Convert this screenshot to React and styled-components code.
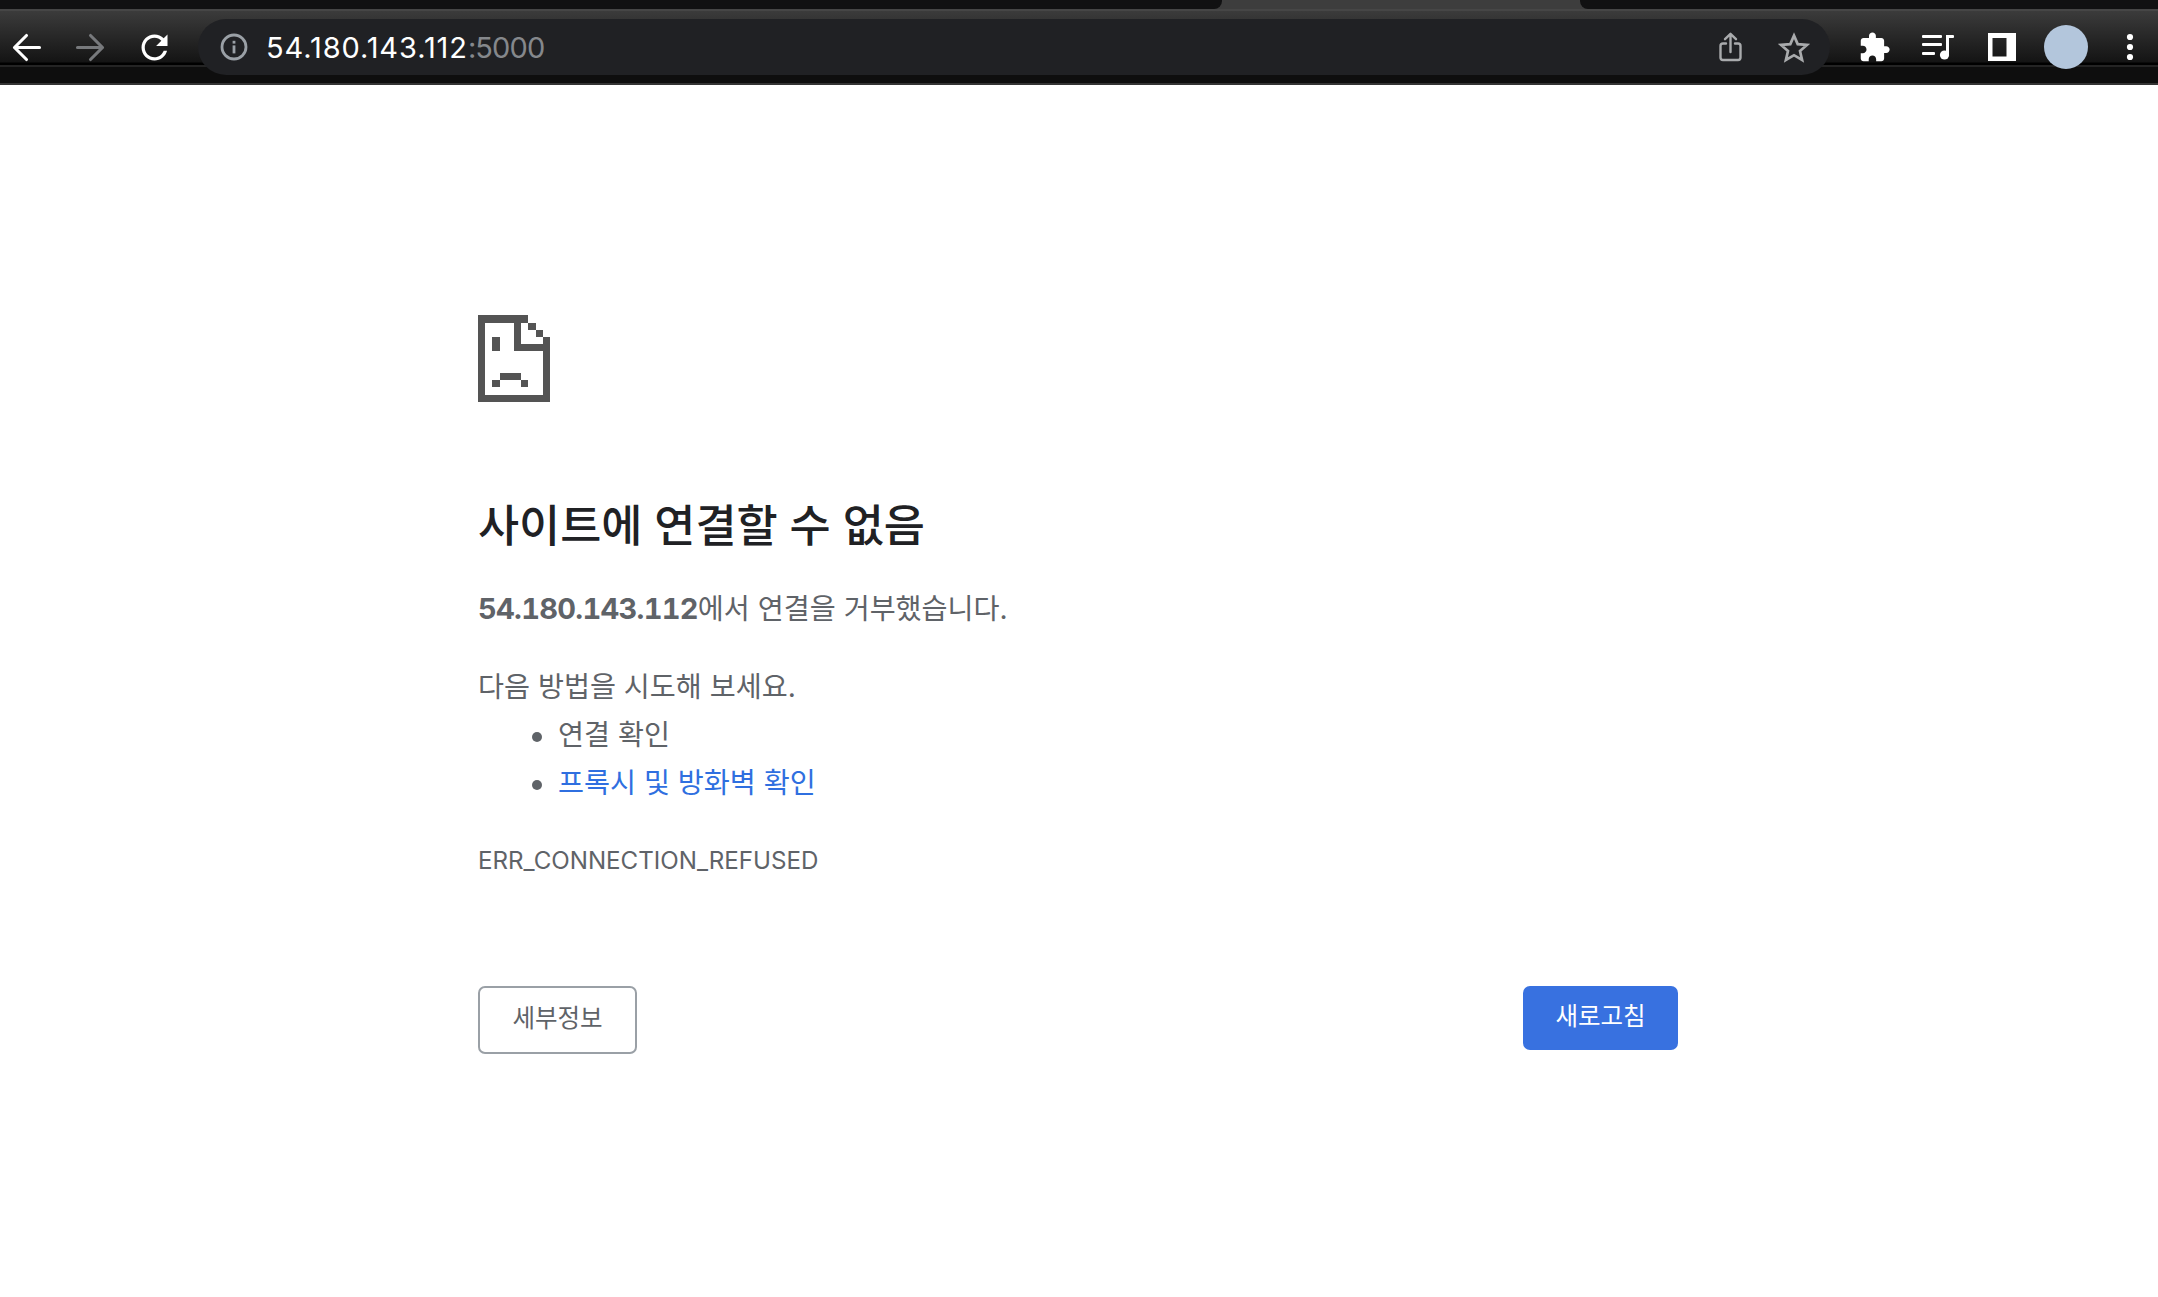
import React from "react";
import styled, { createGlobalStyle } from "styled-components";

const GlobalStyle = createGlobalStyle`
  html, body {
    margin: 0;
    padding: 0;
    background: #fff;
  }
  body {
    font-family: Inter, "Noto Sans CJK KR", sans-serif;
    color: #5f6368;
  }
`;

const BrowserChrome = styled.header`
  height: 85px;
  display: flex;
  flex-direction: column;
`;

const TabStrip = styled.div`
  height: 9px;
  display: flex;
  justify-content: space-between;
  background: #3d3d3d;
`;

const InactiveTabs = styled.div`
  width: ${p => p.$width}px;
  background: #111112;
  border-bottom-left-radius: ${p => (p.$side === "right" ? 8 : 0)}px;
  border-bottom-right-radius: ${p => (p.$side === "left" ? 8 : 0)}px;
`;

const Toolbar = styled.div`
  flex: 1;
  box-sizing: border-box;
  display: flex;
  align-items: flex-start;
  gap: 20px;
  padding: 10px 6px 0 4px;
  border-bottom: 2px solid #343434;
  background: linear-gradient(
    to bottom,
    #464646 0,
    #464646 2px,
    #3b3b3b 2px,
    #141414 53px,
    #000 54px,
    #000 56px,
    #242424 56px,
    #242424 58px,
    #0e0e0e 58px
  );
`;

const IconSlot = styled.button`
  flex: none;
  width: 44px;
  height: 56px;
  padding: 0;
  border: 0;
  background: none;
  display: flex;
  align-items: center;
  justify-content: center;
  color: ${p => p.$color || "#fff"};
`;

const Omnibox = styled.div`
  flex: 1;
  height: 56px;
  box-sizing: border-box;
  margin: 0 2px;
  padding: 0 14px 0 22px;
  display: flex;
  align-items: center;
  gap: 20px;
  border-radius: 28px;
  background: #202124;
`;

const UrlText = styled.div`
  margin: 0 auto 0 -2px;
  font-size: 29px;
  letter-spacing: 0.9px;
  color: #fff;
  line-height: 1;
`;

const UrlPort = styled.span`
  color: #85888c;
  letter-spacing: -0.9px;
`;

const Avatar = styled.div`
  width: 44px;
  height: 44px;
  border-radius: 50%;
  background: #b3c6dc;
`;

const Page = styled.main`
  box-sizing: border-box;
  width: 1202px;
  margin: 0 auto;
  padding: 230px 2px 0 0;
  font-size: 28.25px;
`;

const ErrorIcon = styled.svg`
  display: block;
  width: 72px;
  height: 87px;
`;

const Title = styled.h1`
  margin: 97px 0 0;
  font-size: 44.7px;
  line-height: 54px;
  font-weight: 500;
  color: #202124;
`;

const Paragraph = styled.p`
  margin: ${p => p.$top}px 0 0;
  line-height: 40px;
`;

const Host = styled.strong`
  font-size: 29px;
  font-weight: 700;
  font-variant-numeric: tabular-nums;
  letter-spacing: -0.7px;
`;

const Suggestions = styled.ul`
  margin: 4px 0 0;
  padding: 0 0 0 80px;
  list-style: none;
`;

const Suggestion = styled.li`
  position: relative;
  line-height: 48px;
  &::before {
    content: "";
    position: absolute;
    left: -26px;
    top: 21px;
    width: 10px;
    height: 10px;
    border-radius: 50%;
    background: #5f6368;
  }
`;

const HelpLink = styled.a`
  color: #2f6fe0;
  text-decoration: none;
`;

const ErrorCode = styled.div`
  margin-top: 38px;
  font-size: 24.15px;
  line-height: 32px;
`;

const Buttons = styled.div`
  margin-top: 109px;
  display: flex;
  justify-content: space-between;
  align-items: flex-start;
`;

const DetailsButton = styled.button`
  width: 159px;
  height: 68px;
  padding: 0 0 8px;
  border: 2px solid #9aa0a6;
  border-radius: 7px;
  background: #fff;
  color: #5f6368;
  font-family: inherit;
  font-size: 24.5px;
`;

const ReloadButton = styled.button`
  width: 155px;
  height: 64px;
  padding: 0 0 7px;
  border: 0;
  border-radius: 7px;
  background: #3871e0;
  color: #fff;
  font-family: inherit;
  font-size: 24.5px;
`;

const BackIcon = ({ flip }) => (
  <svg width="39" height="39" viewBox="0 0 24 24" fill="none" stroke="currentColor" strokeWidth="1.9" strokeLinecap="round" strokeLinejoin="round" style={flip ? { transform: "scaleX(-1)" } : undefined}>
    <path d="M20 12H4.6M12 4.6L4.6 12l7.4 7.4" />
  </svg>
);

const ReloadIcon = () => (
  <svg width="39" height="39" viewBox="0 0 24 24" fill="currentColor">
    <path d="M17.65 6.35C16.2 4.9 14.21 4 12 4c-4.42 0-7.99 3.58-7.99 8s3.57 8 7.99 8c3.73 0 6.84-2.55 7.73-6h-2.08c-.82 2.33-3.04 4-5.65 4-3.31 0-6-2.69-6-6s2.69-6 6-6c1.66 0 3.14.69 4.22 1.78L13 11h7V4l-2.35 2.35z" />
  </svg>
);

const InfoIcon = () => (
  <svg width="28" height="28" viewBox="0 0 28 28" style={{ flex: "none" }}>
    <circle cx="14" cy="14" r="12" fill="none" stroke="#9aa0a6" strokeWidth="2.8" />
    <rect x="12.6" y="12.4" width="2.8" height="8" fill="#9aa0a6" />
    <rect x="12.6" y="7.8" width="2.8" height="2.8" fill="#9aa0a6" />
  </svg>
);

const ShareIcon = () => (
  <svg width="23" height="30" viewBox="0 0 23 30" fill="none" stroke="currentColor" strokeWidth="2.4" strokeLinecap="round" strokeLinejoin="round">
    <path d="M7 11.5H4a2.5 2.5 0 0 0-2.5 2.5v11.5A2.5 2.5 0 0 0 4 28h15a2.5 2.5 0 0 0 2.5-2.5V14a2.5 2.5 0 0 0-2.5-2.5h-3" />
    <path d="M11.5 20V2M6 7.2L11.5 1.8 17 7.2" />
  </svg>
);

const StarIcon = () => (
  <svg width="32" height="31" viewBox="0 0 32 31" fill="none" stroke="currentColor" strokeWidth="2.7" strokeLinejoin="miter">
    <path d="M16 3.6l3.7 8.5 9.3.8-7 6.1 2.1 9L16 23.2 7.9 28l2.1-9-7-6.1 9.3-.8z" />
  </svg>
);

const PuzzleIcon = () => (
  <svg width="33" height="33" viewBox="0 0 24 24" fill="currentColor">
    <path d="M20.5 11H19V7c0-1.1-.9-2-2-2h-4V3.5C13 2.12 11.88 1 10.5 1S8 2.12 8 3.5V5H4c-1.1 0-1.99.9-1.99 2v3.8H3.5c1.49 0 2.7 1.21 2.7 2.7s-1.21 2.7-2.7 2.7H2V20c0 1.1.9 2 2 2h3.8v-1.5c0-1.49 1.21-2.7 2.7-2.7 1.49 0 2.7 1.21 2.7 2.7V22H17c1.1 0 2-.9 2-2v-4h1.5c1.38 0 2.5-1.12 2.5-2.5S21.88 11 20.5 11z" />
  </svg>
);

const PlaylistIcon = () => (
  <svg width="32" height="26" viewBox="0 0 32 26" fill="currentColor">
    <rect x="0" y="1" width="20" height="3" rx="1" />
    <rect x="0" y="9" width="20" height="3" rx="1" />
    <rect x="0" y="18" width="13" height="3" rx="1" />
    <rect x="24" y="1" width="3" height="20" />
    <rect x="24" y="1" width="8" height="3" rx="1" />
    <circle cx="22.5" cy="21" r="4.6" />
  </svg>
);

const SidePanelIcon = () => (
  <svg width="28" height="28" viewBox="0 0 28 28">
    <path fill="currentColor" fillRule="evenodd" d="M0 0h28v28H0zM4.5 5v18.5H18.5V5z" />
  </svg>
);

const MenuIcon = () => (
  <svg width="8" height="28" viewBox="0 0 8 28" fill="currentColor">
    <circle cx="4" cy="4" r="3.1" />
    <circle cx="4" cy="14" r="3.1" />
    <circle cx="4" cy="24" r="3.1" />
  </svg>
);

// the sad page is a 10 x 12 pixel drawing
const sadPagePixels = [
  [0, 0, 7, 1],
  [0, 1, 1, 10],
  [0, 11, 10, 1],
  [9, 3, 1, 8],
  [5, 1, 1, 4],
  [5, 4, 5, 1],
  [7, 1, 1, 1],
  [8, 2, 1, 1],
  [2, 3, 1, 2],
  [3, 8, 3, 1],
  [2, 9, 1, 1],
  [6, 9, 1, 1]
];

const App = () => (
  <>
    <GlobalStyle />
    <BrowserChrome>
      <TabStrip>
        <InactiveTabs $width={1222} $side="left" />
        <InactiveTabs $width={578} $side="right" />
      </TabStrip>
      <Toolbar>
        <IconSlot><BackIcon /></IconSlot>
        <IconSlot $color="#77797c"><BackIcon flip /></IconSlot>
        <IconSlot><ReloadIcon /></IconSlot>
        <Omnibox>
          <InfoIcon />
          <UrlText>54.180.143.112<UrlPort>:5000</UrlPort></UrlText>
          <IconSlot $color="#a9abad"><ShareIcon /></IconSlot>
          <IconSlot $color="#a9abad"><StarIcon /></IconSlot>
        </Omnibox>
        <IconSlot><PuzzleIcon /></IconSlot>
        <IconSlot><PlaylistIcon /></IconSlot>
        <IconSlot><SidePanelIcon /></IconSlot>
        <IconSlot><Avatar /></IconSlot>
        <IconSlot><MenuIcon /></IconSlot>
      </Toolbar>
    </BrowserChrome>
    <Page>
      <ErrorIcon viewBox="0 0 10 12" shapeRendering="crispEdges">
        {sadPagePixels.map(([x, y, w, h]) => (
          <rect key={`${x}-${y}`} x={x} y={y} width={w} height={h} fill="#545454" />
        ))}
      </ErrorIcon>
      <Title>사이트에 연결할 수 없음</Title>
      <Paragraph $top={36}><Host>54.180.143.112</Host>에서 연결을 거부했습니다.</Paragraph>
      <Paragraph $top={38}>다음 방법을 시도해 보세요.</Paragraph>
      <Suggestions>
        <Suggestion>연결 확인</Suggestion>
        <Suggestion><HelpLink href="#">프록시 및 방화벽 확인</HelpLink></Suggestion>
      </Suggestions>
      <ErrorCode>ERR_CONNECTION_REFUSED</ErrorCode>
      <Buttons>
        <DetailsButton>세부정보</DetailsButton>
        <ReloadButton>새로고침</ReloadButton>
      </Buttons>
    </Page>
  </>
);

export default App;
